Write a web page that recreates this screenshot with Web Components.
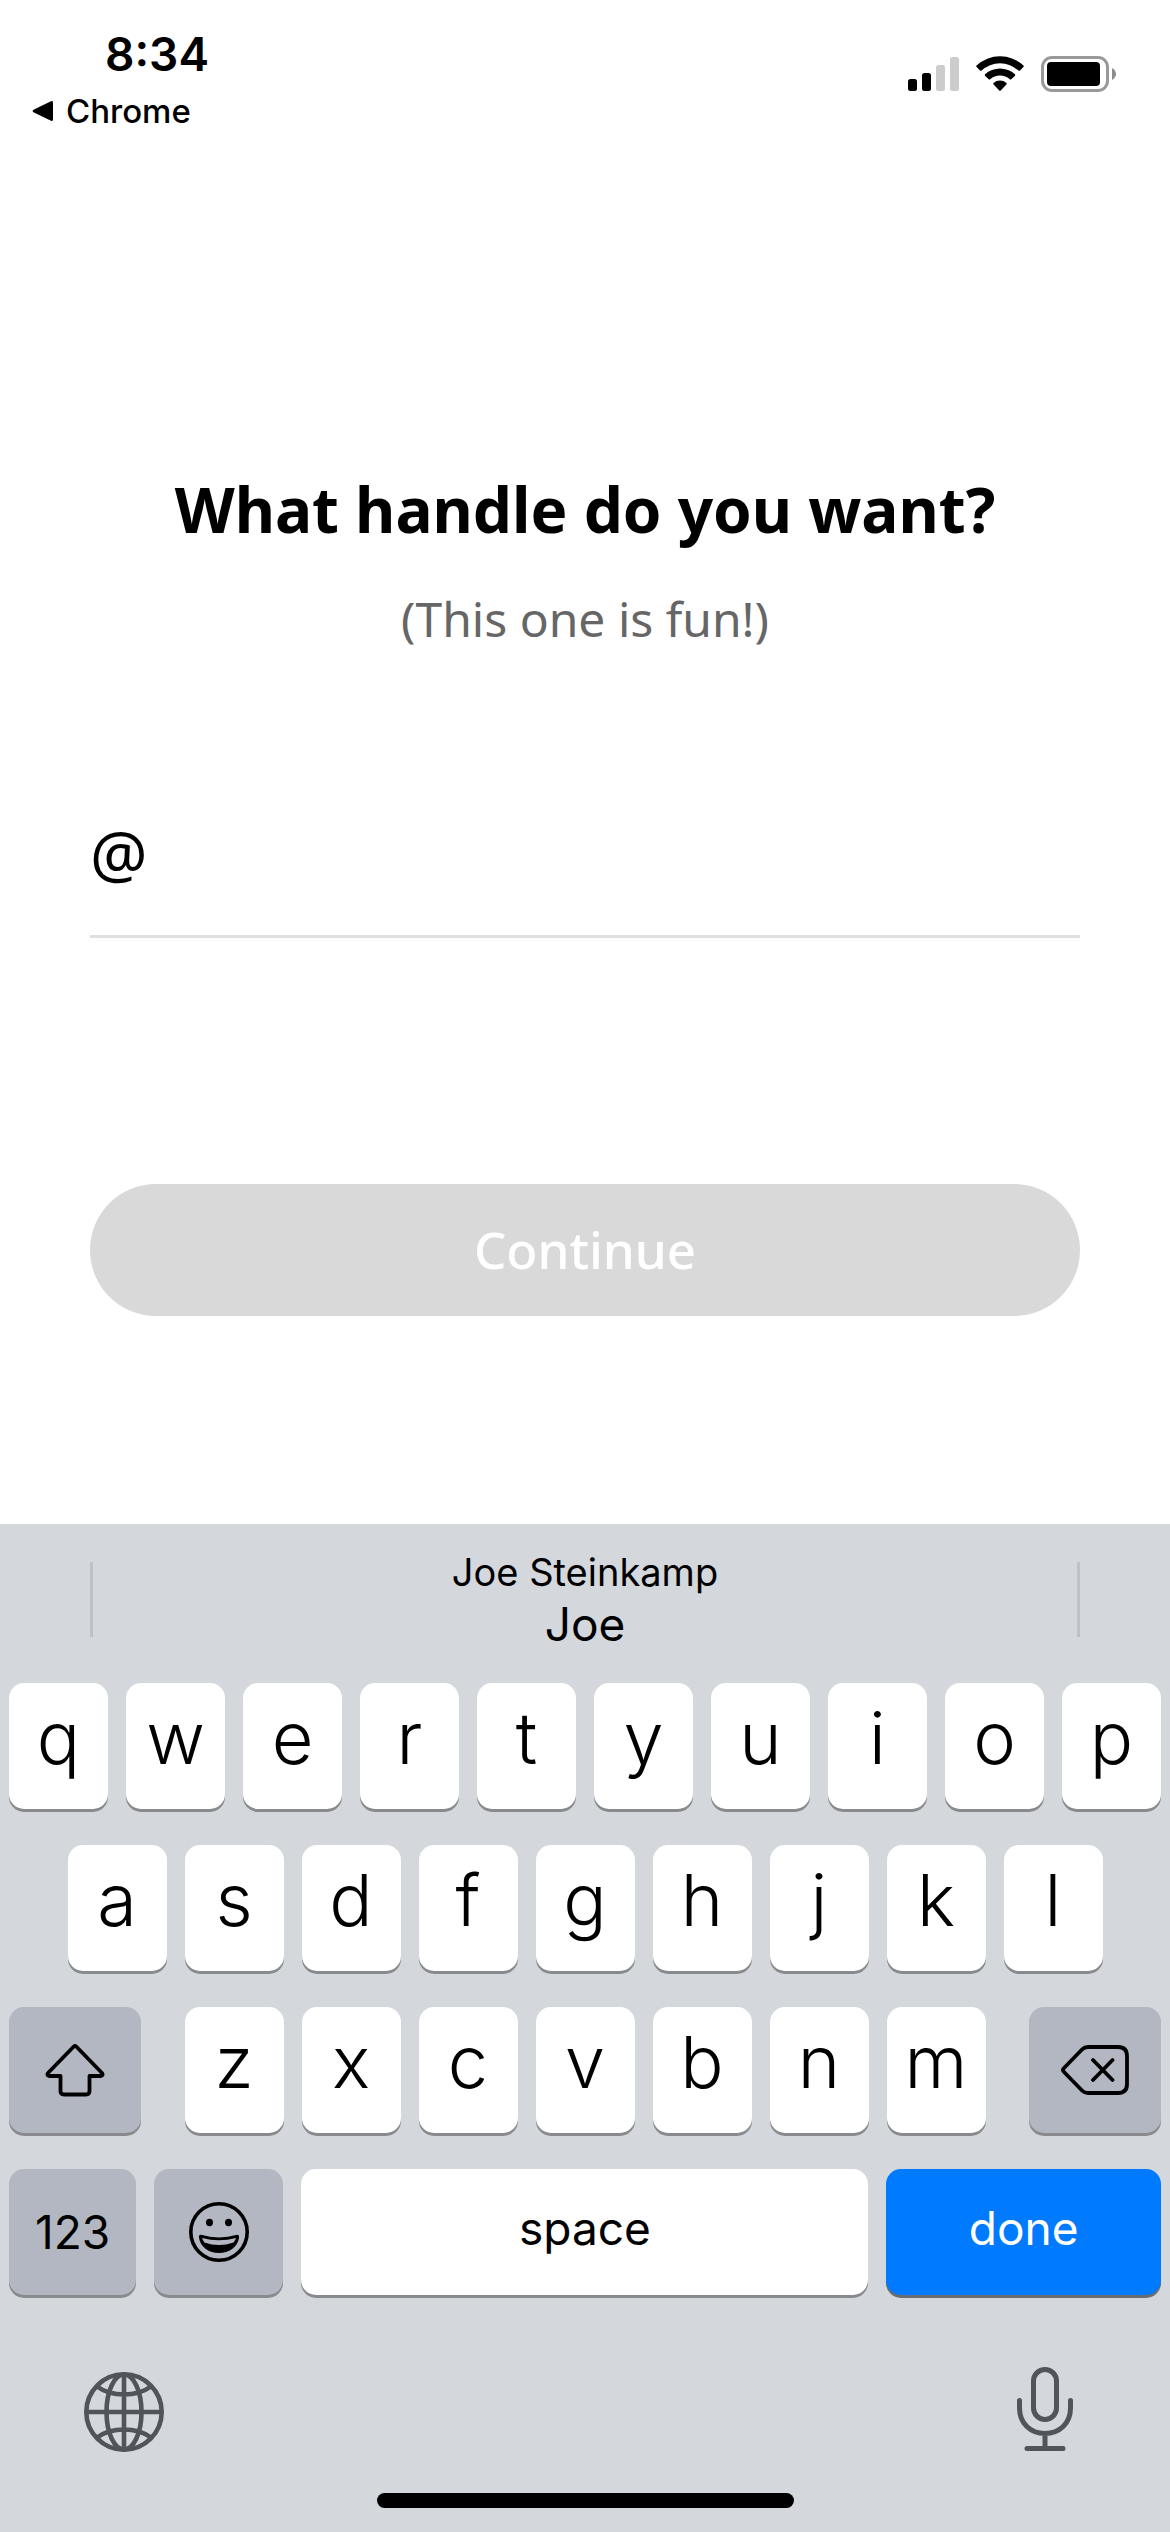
<!DOCTYPE html>
<html lang="en">
<head>
<meta charset="utf-8">
<meta name="viewport" content="width=device-width, initial-scale=1">
<title>Choose a handle</title>
<style>
  html, body { margin: 0; }
  body { background: #fff; color: #000; font-family: Inter, "Liberation Sans", sans-serif; }
</style>
</head>
<body>
<handle-screen></handle-screen>

<script>
const define = (name, html) => {
  const template = document.createElement('template');
  template.innerHTML = html;
  customElements.define(name, class extends HTMLElement {
    constructor() {
      super();
      this.attachShadow({ mode: 'open' }).append(template.content.cloneNode(true));
    }
  });
};

define('status-bar', `
<style>
  :host { display: flex; justify-content: space-between; align-items: flex-start; padding: 24px 54px 0 32px; height: 120px; }
  .left { display: flex; flex-direction: column; }
  time { font-size: 46px; font-weight: 600; line-height: 60px; padding-left: 73px; }
  a { display: flex; align-items: center; gap: 12px; color: #000; text-decoration: none; font-size: 33px; font-weight: 500; line-height: 54px; }
  .right { display: flex; align-items: center; gap: 17px; padding-top: 31px; }
  svg { display: block; }
</style>
<div class="left">
  <time>8:34</time>
  <a href="#"><svg width="22" height="22" viewBox="0 0 22 22" aria-hidden="true"><path d="M2 9.5 19 1.2Q21 .5 21 2.500V19.500Q21 21.500 19 20.800L2 12.500Q-.8 11 2 9.500Z"/></svg><span>Chrome</span></a>
</div>
<div class="right">
  <svg width="51" height="37" viewBox="0 0 51 37" role="img" aria-label="Signal">
    <rect x="0" y="24" width="9" height="12" rx="2.500"/><rect x="14" y="18" width="9" height="18" rx="2.500"/>
    <g fill="#ccc"><rect x="28" y="10" width="9" height="26" rx="2.500"/><rect x="42" y="2" width="9" height="34" rx="2.500"/></g>
  </svg>
  <svg width="48" height="37" viewBox="0 0 48 37" role="img" aria-label="Wi-Fi">
    <path d="M.5 10.500Q0 11.300.6 12L4 15.500Q4.800 16.200 5.600 15.500A27 27 0 0 1 42.400 15.500Q43.200 16.200 44 15.500L47.400 12Q48 11.300 47.500 10.500A34.500 34.500 0 0 0 .5 10.500Z"/>
    <path d="M9 19.300Q8.500 20 9 20.700L12.700 24.300Q13.400 24.900 14.200 24.300A14.700 14.700 0 0 1 33.800 24.300Q34.600 24.900 35.300 24.300L39 20.700Q39.500 20 39 19.300A22 22 0 0 0 9 19.300Z"/>
    <path d="M17.500 28Q17 28.700 17.600 29.400L23.300 35.500Q24 36.300 24.700 35.500L30.400 29.400Q31 28.700 30.500 28A10 10 0 0 0 17.500 28Z"/>
  </svg>
  <svg width="75" height="37" viewBox="0 0 75 37" role="img" aria-label="Battery">
    <rect x="1.500" y="2.500" width="65" height="33" rx="9.500" fill="none" stroke="#999" stroke-width="3"/>
    <rect x="6" y="7" width="53" height="24" rx="4"/>
    <path d="M71 13Q75 15.500 75 19T71 25Z" fill="#8c8c8c"/>
  </svg>
</div>`);

define('handle-form', `
<style>
  :host { display: block; flex: 1; padding: 325px 90px 0; font-family: "Noto Sans", "Open Sans", sans-serif; text-align: center; }
  h1 { margin: 0; font-size: 62px; line-height: 80px; font-weight: 700; }
  p { margin: 38px 0 0; font-size: 48px; line-height: 64px; color: #666; }
  .field { display: flex; align-items: center; margin-top: 152px; padding-bottom: 31px; border-bottom: 3px solid #e0e0e0; text-align: left; }
  label { font-size: 64px; line-height: 101px; }
  input { flex: 1; min-width: 0; border: 0; outline: 0; padding: 0 12px; height: 80px; font: inherit; font-size: 48px; background: none; }
  button { display: block; width: 100%; height: 132px; margin: 246px 0 60px; border: 0; border-radius: 66px; background: #d9d9d9; color: #fff; font: inherit; font-size: 51px; font-weight: 500; padding: 0 0 2px; }
</style>
<h1><slot name="title"></slot></h1>
<p><slot name="hint"></slot></p>
<div class="field"><label for="handle">@</label><input id="handle" type="text" autocomplete="off"></div>
<button type="button" disabled>Continue</button>`);

define('suggestion-bar', `
<style>
  :host { display: flex; align-items: center; justify-content: space-between; height: 75px; padding: 38px 90px 46px; }
  i { width: 3px; height: 75px; background: #bfc1c6; }
  button { border: 0; background: none; padding: 0; font: inherit; color: #000; display: flex; flex-direction: column; align-items: center; }
  small { font-size: 38px; line-height: 48px; }
  span { font-size: 46px; line-height: 56px; }
</style>
<i></i>
<button type="button"><small><slot name="full"></slot></small><span><slot></slot></span></button>
<i></i>`);

define('key-cap', `
<style>
  :host { display: block; box-sizing: border-box; flex: 0 0 10%; min-width: 0; padding: 0 9px; }
  button { display: flex; align-items: center; justify-content: center; width: 100%; height: 126px; padding: 0 0 18px; border: 0; border-radius: 15px; background: #fff; box-shadow: 0 3px 0 #898a8d; color: #000; font: inherit; font-size: 72px; font-weight: 350; }
  :host([kind]) button { font-size: 46px; font-weight: 400; padding-bottom: 8px; }
  :host([kind="special"]) button { background: #b3b7c1; padding-bottom: 0; }
  :host([kind="primary"]) button { background: #007aff; color: #fff; box-shadow: 0 3px 0 #686c73; }
  ::slotted(svg) { display: block; }
</style>
<button type="button"><slot></slot></button>`);

define('key-row', `
<style>
  :host { display: flex; justify-content: center; margin-bottom: 36px; }
  :host([spread]) { justify-content: space-between; }
</style>
<slot></slot>`);

define('touch-keyboard', `
<style>
  :host { display: block; background: #d4d7dc; }
  .shift { flex-basis: 150px; }
  .group { display: flex; flex: 0 0 70%; }
  .group key-cap { flex: 1; }
  .num { flex-basis: 12.4%; } .emoji { flex-basis: 12.6%; } .space { flex-basis: 50%; } .done { flex-basis: 25%; }
  .dock { display: flex; justify-content: space-between; align-items: center; padding: 36px 97px 0 84px; }
  .dock button { border: 0; background: none; padding: 0; }
  svg { display: block; fill: none; stroke: #000; stroke-linecap: round; stroke-linejoin: round; }
  .dock svg { stroke: #50555c; }
  .home { width: 417px; height: 15px; border-radius: 8px; background: #000; margin: 40px auto 0; }
  .end { height: 24px; }
</style>
<suggestion-bar><span slot="full">Joe Steinkamp</span>Joe</suggestion-bar>
<key-row><key-cap>q</key-cap><key-cap>w</key-cap><key-cap>e</key-cap><key-cap>r</key-cap><key-cap>t</key-cap><key-cap>y</key-cap><key-cap>u</key-cap><key-cap>i</key-cap><key-cap>o</key-cap><key-cap>p</key-cap></key-row>
<key-row><key-cap>a</key-cap><key-cap>s</key-cap><key-cap>d</key-cap><key-cap>f</key-cap><key-cap>g</key-cap><key-cap>h</key-cap><key-cap>j</key-cap><key-cap>k</key-cap><key-cap>l</key-cap></key-row>
<key-row spread>
  <key-cap class="shift" kind="special"><svg aria-label="shift" width="60" height="54" viewBox="0 0 60 54" stroke-width="3.800"><path d="M28.800 3.500Q30 2.300 31.200 3.500L57 30Q58.500 32.500 56 33H44.500V48Q44.500 51.500 41 51.500H19Q15.500 51.500 15.500 48V33H4Q1.500 32.500 3 30Z"/></svg></key-cap>
  <div class="group"><key-cap>z</key-cap><key-cap>x</key-cap><key-cap>c</key-cap><key-cap>v</key-cap><key-cap>b</key-cap><key-cap>n</key-cap><key-cap>m</key-cap></div>
  <key-cap class="shift" kind="special"><svg aria-label="delete" width="68" height="50" viewBox="0 0 68 50" stroke-width="3.800"><path d="M27 2H57Q66 2 66 11V39Q66 48 57 48H27Q23.500 48 21 45.500L3 27Q1 25 3 23L21 4.500Q23.500 2 27 2ZM32 15 51.500 35M51.500 15 32 35"/></svg></key-cap>
</key-row>
<key-row>
  <key-cap class="num" kind="special">123</key-cap>
  <key-cap class="emoji" kind="special"><svg aria-label="emoji" width="60" height="60" viewBox="0 0 60 60"><circle cx="30" cy="30" r="28.200" stroke-width="3.600"/><g fill="#000" stroke="none"><ellipse cx="20.500" cy="20.500" rx="3.500" ry="3.700"/><ellipse cx="39.500" cy="20.500" rx="3.500" ry="3.700"/><path fill-rule="evenodd" d="M12 32.800Q30 38 48 32.800Q50.500 32.500 50 36C48.500 45 40 51 30 51S11.500 45 10 36Q9.500 32.500 12 32.800ZM13 36Q13.500 38 15.500 40.500Q30 45.500 44.500 40.500Q46.500 38 47 36Q30 40.500 13 36Z"/></g></svg></key-cap>
  <key-cap class="space" kind="word">space</key-cap>
  <key-cap class="done" kind="primary">done</key-cap>
</key-row>
<div class="dock">
  <button type="button" aria-label="Next keyboard"><svg width="80" height="86" viewBox="0 -5 80 86" stroke-width="4.600" style="stroke-linecap:butt"><circle cx="40" cy="40" r="37.700"/><ellipse cx="40" cy="40" rx="17.500" ry="37.500"/><path d="M40 2.500V77.500M2.500 40H77.500M13 14.500Q24 22.500 40 22.500T67 14.500M13 65.500Q24 57.500 40 57.500T67 65.500"/></svg></button>
  <button type="button" aria-label="Dictate"><svg width="56" height="86" viewBox="0 0 56 86" stroke-width="5"><rect x="16.500" y="2.500" width="23" height="50" rx="11.500"/><path d="M2.500 33.500V41C2.500 56.500 13.500 66.500 28 66.500S53.500 56.500 53.500 41V33.500M28 66.500V81.500M10 81.500H46"/></svg></button>
</div>
<div class="home"></div>
<div class="end"></div>`);

define('handle-screen', `
<style>
  :host { display: flex; flex-direction: column; min-height: 100vh; }
</style>
<status-bar></status-bar>
<handle-form><span slot="title">What handle do you want?</span><span slot="hint">(This one is fun!)</span></handle-form>
<touch-keyboard></touch-keyboard>`);
</script>
</body>
</html>
